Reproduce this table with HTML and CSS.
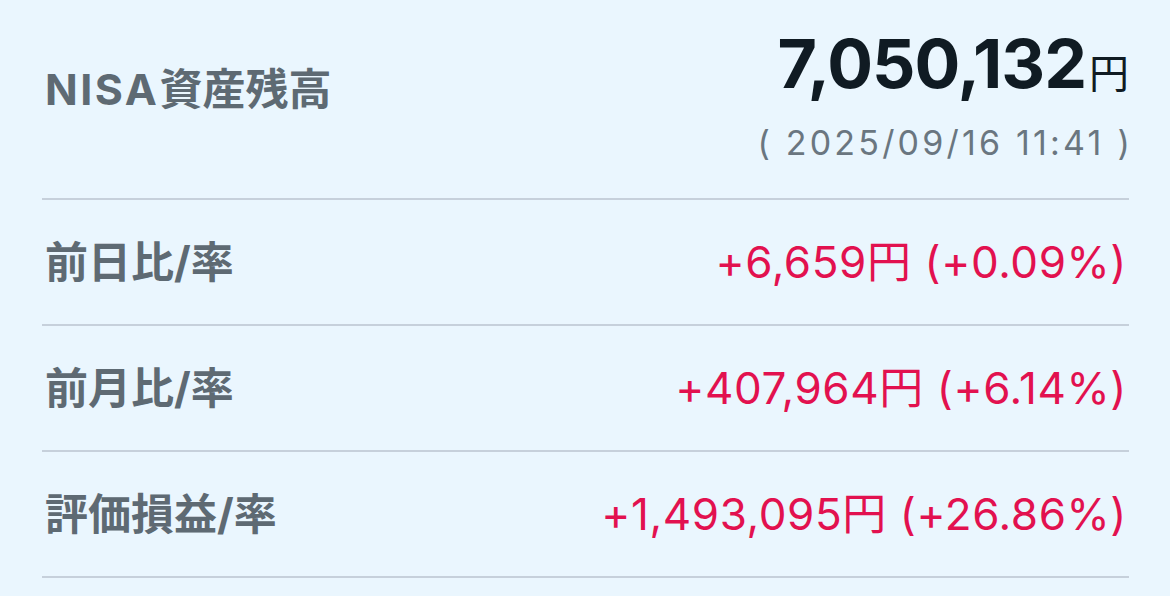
FILE: index.html
```html
<!DOCTYPE html>
<html lang="ja">
<head>
<meta charset="utf-8">
<link rel="stylesheet" href="styles.css">
</head>
<body>
<div class="panel">
  <div class="header">
    <div class="title"><span class="latin">NISA</span>資産残高</div>
    <div class="total">
      <div class="amount"><span class="num">7,050,132</span><span class="yen">円</span></div>
      <div class="date">( 2025/09/16 11:41 )</div>
    </div>
  </div>
  <div class="row">
    <div class="label">前日比/率</div>
    <div class="value">+6,659円 (+0.09%)</div>
  </div>
  <div class="row">
    <div class="label">前月比/率</div>
    <div class="value">+407,964円 (+6.14%)</div>
  </div>
  <div class="row">
    <div class="label">評価損益/率</div>
    <div class="value">+1,493,095円 (+26.86%)</div>
  </div>
</div>
</body>
</html>
```

FILE: styles.css
```css
html, body {
  margin: 0;
  padding: 0;
  background: #eaf6fe;
}
body {
  font-family: Inter, "Noto Sans CJK JP", sans-serif;
  width: 1170px;
  height: 596px;
  overflow: hidden;
}
.panel {
  padding: 0 41px 0 42px;
}
.header {
  display: flex;
  justify-content: space-between;
  align-items: center;
  height: 198px;
  border-bottom: 2px solid #c6d0db;
}
.title {
  font-size: 43px;
  font-weight: 700;
  color: #5e6a73;
  padding-left: 3px;
  margin-top: -26px;
}
.latin {
  letter-spacing: 2.5px;
}
.total {
  display: flex;
  flex-direction: column;
  align-items: flex-end;
  margin-top: -8px;
}
.amount {
  display: flex;
  align-items: baseline;
  color: #101b23;
  line-height: 74px;
}
.num {
  font-size: 68px;
  font-weight: 700;
  letter-spacing: -1px;
}
.yen {
  font-size: 40px;
  font-weight: 400;
  margin-left: 3px;
}
.date {
  font-size: 34px;
  color: #6a7680;
  line-height: 44px;
  letter-spacing: 3.2px;
  margin-top: 10px;
  margin-right: -4px;
}
.row {
  display: flex;
  justify-content: space-between;
  align-items: center;
  height: 124px;
  border-bottom: 2px solid #c6d0db;
}
.label {
  font-size: 43px;
  font-weight: 700;
  color: #5e6a73;
  padding-left: 3px;
  margin-top: -6px;
}
.value {
  font-size: 44px;
  color: #e2114f;
  letter-spacing: 0.6px;
  margin-top: -6px;
  margin-right: 2px;
}
```
